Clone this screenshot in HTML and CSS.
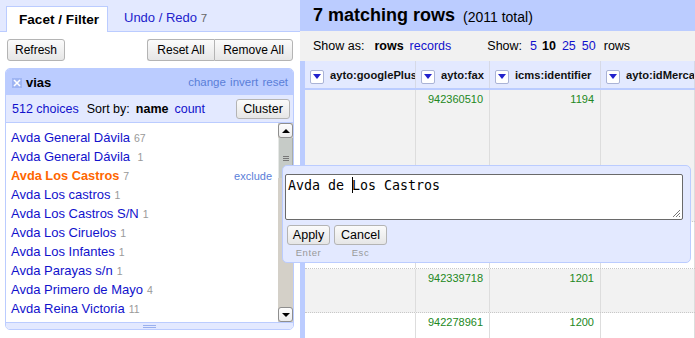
FILE: index.html
```html
<!DOCTYPE html>
<html>
<head>
<meta charset="utf-8">
<link rel="stylesheet" href="styles.css">
</head>
<body>
<div class="app">
  <div class="left">
    <div class="tabs">
      <div class="tab active">Facet / Filter</div>
      <div class="tab"><a>Undo / Redo</a> <span class="tab-count">7</span></div>
    </div>
    <div class="toolbar">
      <button class="btn">Refresh</button>
      <div class="btn-group"><button class="btn">Reset All</button><button class="btn">Remove All</button></div>
    </div>
    <div class="facet">
      <div class="facet-title">
        <svg class="close" width="10" height="10" viewBox="0 0 10 10"><rect width="10" height="10" fill="#9fb5f3"/><path d="M2 2L8 8M8 2L2 8" stroke="#fff" stroke-width="1.6"/></svg>
        <span class="facet-name">vias</span>
        <span class="facet-actions"><a>change</a> <a>invert</a> <a>reset</a></span>
      </div>
      <div class="facet-controls">
        <a>512 choices</a>
        <span class="sort">Sort by:</span>
        <b class="sort-name">name</b>
        <a class="sort-count">count</a>
        <button class="btn cluster">Cluster</button>
      </div>
      <div class="facet-body">
        <div class="choices">
          <div class="choice"><a>Avda General Dávila</a><span class="count">67</span></div>
          <div class="choice"><a>Avda General Dávila&nbsp;</a><span class="count">1</span></div>
          <div class="choice selected"><a>Avda Los Castros</a><span class="count">7</span><a class="exclude">exclude</a></div>
          <div class="choice"><a>Avda Los castros</a><span class="count">1</span></div>
          <div class="choice"><a>Avda Los Castros S/N</a><span class="count">1</span></div>
          <div class="choice"><a>Avda Los Ciruelos</a><span class="count">1</span></div>
          <div class="choice"><a>Avda Los Infantes</a><span class="count">1</span></div>
          <div class="choice"><a>Avda Parayas s/n</a><span class="count">1</span></div>
          <div class="choice"><a>Avda Primero de Mayo</a><span class="count">4</span></div>
          <div class="choice"><a>Avda Reina Victoria</a><span class="count">11</span></div>
          <div class="choice"><a>Avda San Martín del Pino</a><span class="count">1</span></div>
        </div>
        <div class="scrollbar">
          <div class="sb-btn"><span class="tri-up"></span></div>
          <div class="sb-thumb"><span class="grip"></span></div>
          <div class="sb-track"></div>
          <div class="sb-btn"><span class="tri-down"></span></div>
        </div>
      </div>
      <div class="facet-resize"><span class="resize-grip"></span></div>
    </div>
  </div>

  <div class="right">
    <div class="summary"><b class="summary-count">7 matching rows</b><span class="summary-total">(2011 total)</span></div>
    <div class="viewbar">
      <span>Show as:</span>
      <b class="vb-rows">rows</b>
      <a class="vb-records">records</a>
      <span class="vb-show">Show:</span>
      <a class="vb-5">5</a>
      <b class="vb-10">10</b>
      <a class="vb-25">25</a>
      <a class="vb-50">50</a>
      <span class="vb-rowsword">rows</span>
    </div>
    <div class="table">
      <div class="grid head">
        <div class="hcell"><span class="menu"><span class="tri-menu"></span></span><span class="hname">ayto:googlePlus</span></div>
        <div class="hcell"><span class="menu"><span class="tri-menu"></span></span><span class="hname">ayto:fax</span></div>
        <div class="hcell"><span class="menu"><span class="tri-menu"></span></span><span class="hname">icms:identifier</span></div>
        <div class="hcell"><span class="menu"><span class="tri-menu"></span></span><span class="hname">ayto:idMercado</span></div>
      </div>
      <div class="grid row odd tall">
        <div class="cell"></div>
        <div class="cell num">942360510</div>
        <div class="cell num">1194</div>
        <div class="cell"></div>
      </div>
      <div class="grid row even mid">
        <div class="cell"></div>
        <div class="cell num">942350411</div>
        <div class="cell num">1195</div>
        <div class="cell"></div>
      </div>
      <div class="grid row odd">
        <div class="cell"></div>
        <div class="cell num">942339718</div>
        <div class="cell num">1201</div>
        <div class="cell"></div>
      </div>
      <div class="grid row even">
        <div class="cell"></div>
        <div class="cell num">942278961</div>
        <div class="cell num">1200</div>
        <div class="cell"></div>
      </div>
    </div>
  </div>
</div>

<div class="editor">
  <div class="editor-text">Avda de <span class="caret"></span>Los Castros<svg class="editor-grip" width="9" height="9" viewBox="0 0 9 9"><path d="M8 1L1 8M8 4L4 8M8 7L7 8" stroke="#777" stroke-width="1"/></svg></div>
  <div class="editor-buttons">
    <div class="editor-btn-col"><button class="btn ebtn apply">Apply</button><span class="hint">Enter</span></div>
    <div class="editor-btn-col"><button class="btn ebtn cancel">Cancel</button><span class="hint">Esc</span></div>
  </div>
</div>
</body>
</html>
```

FILE: styles.css
```css
* { box-sizing: border-box; }
html, body { margin: 0; padding: 0; }
body {
  font-family: "Liberation Sans", Arial, sans-serif;
  font-size: 13px;
  color: #000;
  width: 695px;
  height: 338px;
  overflow: hidden;
  position: relative;
  background: #fff;
}
a { color: #11c; text-decoration: none; }

.app { display: flex; height: 338px; }

/* ---------- left panel ---------- */
.left { width: 300px; flex: none; background: #fff; }

.tabs {
  height: 32px;
  background: #e3e9ff;
  border-bottom: 1px solid #bcf;
  display: flex;
  align-items: flex-end;
  padding-left: 6px;
}
.tab {
  height: 26px;
  line-height: 25px;
  padding: 0 0 0 16px;
  font-size: 13px;
}
.tab a { color: #22c; }
.tab-count { color: #666; font-size: 11.5px; }
.tab.active {
  width: 102px;
  height: 26px;
  margin-bottom: -1px;
  padding-left: 12px;
  background: #fff;
  border: 1px solid #bcf;
  border-bottom: none;
  font-weight: bold;
  font-size: 13.6px;
}

.toolbar {
  display: flex;
  justify-content: space-between;
  padding: 7px 7px 0 7px;
  height: 36px;
}
.btn {
  font-family: "Liberation Sans", Arial, sans-serif;
  font-size: 12px;
  color: #000;
  height: 22px;
  padding: 0 7px;
  background: linear-gradient(#fbfbfb, #e6e6e6);
  border: 1px solid #b4b4b4;
  border-radius: 3px;
}
.btn-group { display: flex; }
.btn-group .btn:first-child { border-radius: 3px 0 0 3px; border-right: none; width: 67px; }
.btn-group .btn:last-child { border-radius: 0 3px 3px 0; width: 79px; }

.facet {
  margin: 0 6px 0 5px;
  border: 1px solid #bcf;
  border-radius: 5px;
  overflow: hidden;
}
.facet-title {
  height: 26px;
  background: #bcf;
  display: flex;
  align-items: center;
  padding: 0 5px 0 6px;
}
.close { flex: none; margin-top: 1px; }
.facet-name { font-weight: bold; font-size: 13px; margin-left: 4px; }
.facet-actions { margin-left: auto; font-size: 11.5px; word-spacing: 1px; }
.facet-actions a { color: #5a7ed8; }

.facet-controls {
  height: 27px;
  background: #e3e9ff;
  display: flex;
  align-items: center;
  padding: 0 3px 0 6px;
  font-size: 12.5px;
}
.sort { margin-left: 8px; }
.sort-name { margin-left: 6px; }
.sort-count { margin-left: 6px; }
.btn.cluster {
  margin-left: auto;
  height: 20px;
  width: 54px;
  padding: 0;
  font-size: 12.5px;
}

.facet-body {
  height: 201px;
  border-top: 1px solid #bcf;
  border-bottom: 1px solid #bcf;
  display: flex;
  background: #fff;
}
.choices {
  flex: 1;
  overflow: hidden;
  padding: 5px 6px 0 5px;
}
.choice {
  height: 19px;
  line-height: 19px;
  font-size: 13px;
  display: flex;
  align-items: baseline;
  white-space: nowrap;
}
.choice a { color: #11c; }
.count { color: #999; font-size: 10.5px; margin-left: 4px; }
.choice.selected > a:first-child { color: #f60; font-weight: bold; font-size: 12.8px; }
.choice .exclude { margin-left: auto; color: #5a7ed8; font-size: 11px; }

.scrollbar {
  width: 15px;
  flex: none;
  display: flex;
  flex-direction: column;
  background: #d4d0c8;
}
.sb-btn {
  height: 15px;
  flex: none;
  background: linear-gradient(#fdfdfd, #ececec);
  border: 1px solid #8e8e8e;
  border-radius: 3px;
  display: flex;
  align-items: center;
  justify-content: center;
}
.tri-up { width: 0; height: 0; border-left: 4px solid transparent; border-right: 4px solid transparent; border-bottom: 4px solid #000; }
.tri-down { width: 0; height: 0; border-left: 4px solid transparent; border-right: 4px solid transparent; border-top: 4px solid #000; }
.sb-thumb {
  height: 40px;
  flex: none;
  background: #c6cbc7;
  border-left: 1px solid #e6e8e6;
  border-right: 1px solid #a8aca8;
  display: flex;
  align-items: center;
  justify-content: center;
}
.grip {
  width: 6px;
  height: 5px;
  border-top: 1px solid #777;
  border-bottom: 1px solid #777;
  background: linear-gradient(transparent 1px, #777 1px, #777 2px, transparent 2px);
}
.sb-track { flex: 1; }

.facet-resize {
  height: 6px;
  background: #e3e9ff;
  display: flex;
  justify-content: center;
  padding-top: 2px;
}
.resize-grip {
  width: 13px;
  height: 3px;
  border-top: 1px solid #9ab0ee;
  border-bottom: 1px solid #9ab0ee;
}

/* ---------- right panel ---------- */
.right { flex: 1; min-width: 0; overflow: hidden; }

.summary {
  height: 31px;
  background: #bcf;
  display: flex;
  align-items: center;
  padding-left: 13px;
}
.summary-count { font-size: 18px; }
.summary-total { font-size: 14px; margin-left: 8px; margin-top: 2px; }

.viewbar {
  height: 30px;
  background: #f1f1f1;
  display: flex;
  align-items: center;
  padding-left: 13px;
  font-size: 12.5px;
  white-space: nowrap;
}
.vb-rows { margin-left: 10px; }
.vb-records { margin-left: 6px; }
.vb-show { margin-left: 36px; }
.vb-5 { margin-left: 8px; }
.vb-10 { margin-left: 5px; }
.vb-25 { margin-left: 6px; }
.vb-50 { margin-left: 6px; }
.vb-rowsword { margin-left: 8px; }

.table { border-left: 5px solid #bcf; }
.grid {
  display: grid;
  grid-template-columns: 111px 74px 111px 1fr;
}
.head {
  height: 29px;
  background: #e3e9ff;
  border-bottom: 2px solid #bcf;
}
.hcell {
  display: flex;
  align-items: center;
  padding-left: 5px;
  border-right: 1px solid #d6d9e6;
  overflow: hidden;
  white-space: nowrap;
}
.menu {
  width: 14px;
  height: 14px;
  flex: none;
  margin-top: 4px;
  background: #fff;
  border: 1px solid #aab3d6;
  border-radius: 2px;
  display: flex;
  align-items: center;
  justify-content: center;
}
.tri-menu { width: 0; height: 0; border-left: 4px solid transparent; border-right: 4px solid transparent; border-top: 5px solid #22c; }
.hname { font-weight: bold; font-size: 11.2px; color: #111; margin-left: 6px; }

.row { border-bottom: 1px dotted #c8c8c8; height: 44px; }
.row.tall { height: 132px; }
.row.mid { height: 47px; }
.row.odd { background: #f2f2f2; }
.row.even { background: #fff; }
.cell {
  border-right: 1px solid #ddd;
  padding: 3px 6px 0 6px;
  font-size: 11px;
  line-height: 13px;
}
.cell.num { color: #282; text-align: right; }

/* ---------- cell editor popup ---------- */
.editor {
  position: absolute;
  left: 282px;
  top: 165px;
  width: 409px;
  height: 98px;
  background: #e3e9ff;
  border: 1px solid #bcf;
  border-radius: 5px;
  padding: 8px 0 0 2px;
}
.editor-text {
  position: relative;
  width: 398px;
  height: 46px;
  background: #fff;
  border: 1px solid #6a6a6a;
  border-radius: 2px;
  padding: 2px 2px;
  font-family: "DejaVu Sans Mono", "Liberation Mono", monospace;
  font-size: 13.3px;
  line-height: 17px;
  white-space: pre;
}
.caret {
  display: inline-block;
  width: 0;
  height: 16px;
  vertical-align: -3px;
  border-left: 1px solid #000;
  margin-right: -1px;
}
.editor-grip { position: absolute; right: 1px; bottom: 1px; }
.editor-buttons { display: flex; gap: 4px; padding: 5px 0 0 2px; }
.editor-btn-col { display: flex; flex-direction: column; align-items: center; }
.ebtn { height: 20px; font-size: 12.5px; padding: 0; }
.ebtn.apply { width: 43px; }
.ebtn.cancel { width: 53px; }
.hint { font-size: 9.5px; color: #999; letter-spacing: 0.6px; margin-top: 2px; }
```
